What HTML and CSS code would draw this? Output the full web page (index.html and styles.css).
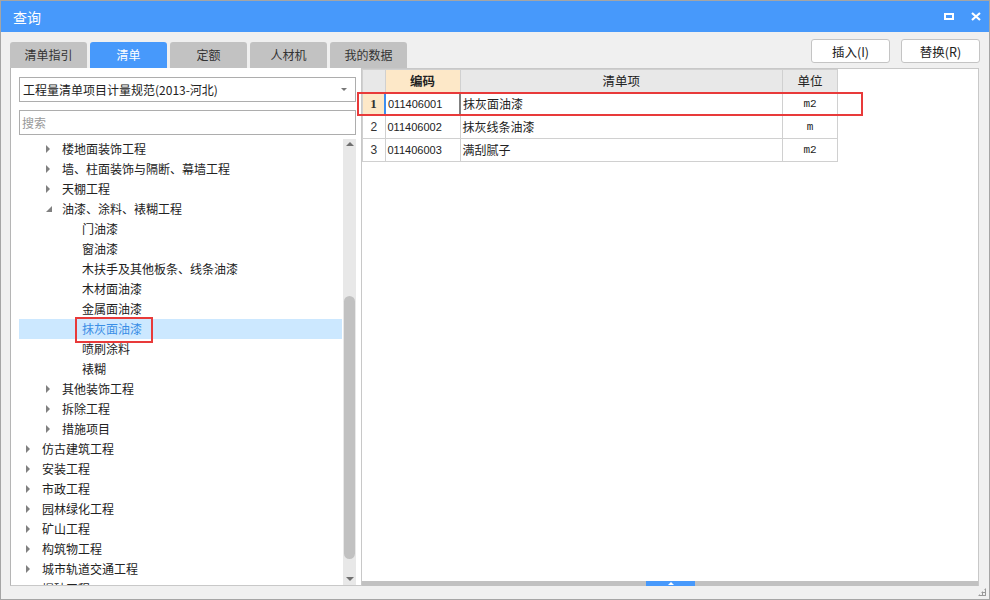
FILE: index.html
```html
<!DOCTYPE html>
<html lang="zh">
<head>
    <meta charset="UTF-8">
    <title>查询</title>
    <link rel="stylesheet" href="styles.css">
</head>
<body>
    <div class="window">
        <div class="titlebar">
            <span class="title">查询</span>
            <div class="title-buttons">
                <span class="btn-max"></span>
                <svg class="btn-close" width="10" height="9" viewBox="0 0 10 9">
                    <path d="M1 1 L9 8 M9 1 L1 8" stroke="#fff" stroke-width="2.2" fill="none"/>
                </svg>
            </div>
        </div>

        <div class="toolbar">
            <div class="tabs">
                <div class="tab">清单指引</div>
                <div class="tab active">清单</div>
                <div class="tab">定额</div>
                <div class="tab">人材机</div>
                <div class="tab">我的数据</div>
            </div>
            <div class="actions">
                <button class="button">插入(I)</button>
                <button class="button">替换(R)</button>
            </div>
        </div>

        <div class="main">
            <div class="left-panel">
                <div class="select">
                    <span>工程量清单项目计量规范(2013-河北)</span>
                    <span class="select-arrow"></span>
                </div>
                <div class="search">搜索</div>
                <div class="tree-wrap">
                    <div class="tree">
                        <div class="node lv1"><span class="arrow"></span>楼地面装饰工程</div>
                        <div class="node lv1"><span class="arrow"></span>墙、柱面装饰与隔断、幕墙工程</div>
                        <div class="node lv1"><span class="arrow"></span>天棚工程</div>
                        <div class="node lv1"><span class="arrow open"></span>油漆、涂料、裱糊工程</div>
                        <div class="node lv2">门油漆</div>
                        <div class="node lv2">窗油漆</div>
                        <div class="node lv2">木扶手及其他板条、线条油漆</div>
                        <div class="node lv2">木材面油漆</div>
                        <div class="node lv2">金属面油漆</div>
                        <div class="node lv2 selected"><span class="mark">抹灰面油漆</span></div>
                        <div class="node lv2">喷刷涂料</div>
                        <div class="node lv2">裱糊</div>
                        <div class="node lv1"><span class="arrow"></span>其他装饰工程</div>
                        <div class="node lv1"><span class="arrow"></span>拆除工程</div>
                        <div class="node lv1"><span class="arrow"></span>措施项目</div>
                        <div class="node lv0"><span class="arrow"></span>仿古建筑工程</div>
                        <div class="node lv0"><span class="arrow"></span>安装工程</div>
                        <div class="node lv0"><span class="arrow"></span>市政工程</div>
                        <div class="node lv0"><span class="arrow"></span>园林绿化工程</div>
                        <div class="node lv0"><span class="arrow"></span>矿山工程</div>
                        <div class="node lv0"><span class="arrow"></span>构筑物工程</div>
                        <div class="node lv0"><span class="arrow"></span>城市轨道交通工程</div>
                        <div class="node lv0"><span class="arrow"></span>爆破工程</div>
                    </div>
                    <div class="vscroll">
                        <span class="up"></span>
                        <div class="thumb"></div>
                        <span class="down"></span>
                    </div>
                </div>
            </div>

            <div class="right-panel">
                <table class="grid">
                    <tr class="head">
                        <th class="num"></th>
                        <th class="code">编码</th>
                        <th class="name">清单项</th>
                        <th class="unit">单位</th>
                    </tr>
                    <tr class="current">
                        <td class="num">1</td>
                        <td class="code">011406001</td>
                        <td class="name">抹灰面油漆</td>
                        <td class="unit">m2</td>
                    </tr>
                    <tr>
                        <td class="num">2</td>
                        <td class="code">011406002</td>
                        <td class="name">抹灰线条油漆</td>
                        <td class="unit">m</td>
                    </tr>
                    <tr>
                        <td class="num">3</td>
                        <td class="code">011406003</td>
                        <td class="name">满刮腻子</td>
                        <td class="unit">m2</td>
                    </tr>
                </table>
                <div class="row-mark"></div>
                <div class="hscroll">
                    <div class="hthumb"><span></span></div>
                </div>
            </div>
        </div>
        <div class="grip"></div>
    </div>
</body>
</html>
```

FILE: styles.css
```css
body {
    margin: 0;
    font-family: "Noto Sans CJK SC", sans-serif;
    font-size: 12px;
    color: #222;
}

.window {
    position: relative;
    width: 990px;
    height: 600px;
    box-sizing: border-box;
    border: 1px solid #a5a5a5;
    background: #f0f0f0;
    display: flex;
    flex-direction: column;
}

.titlebar {
    height: 31px;
    background: #4799fb;
    display: flex;
    align-items: center;
    justify-content: space-between;
    padding: 0 8px 0 12px;
    color: #fff;
}

.title {
    font-size: 14px;
    line-height: 20px;
}

.title-buttons {
    display: flex;
    align-items: center;
    gap: 17px;
}

.btn-max {
    width: 6px;
    height: 3px;
    border: 2px solid #fff;
}

.btn-close {
    display: block;
}

.toolbar {
    display: flex;
    justify-content: space-between;
    padding: 7px 9px 0 9px;
    height: 29px;
}

.tabs {
    display: flex;
    gap: 3px;
    margin-top: 3px;
}

.tab {
    width: 77px;
    height: 26px;
    line-height: 26px;
    text-align: center;
    background: #c2c2c2;
    color: #333;
    border-radius: 3px 3px 0 0;
}

.tab.active {
    background: #4799fb;
    color: #fff;
}

.actions {
    display: flex;
    gap: 11px;
}

.button {
    width: 79px;
    height: 24px;
    background: #fff;
    border: 1px solid #c4c4c4;
    border-radius: 3px;
    font-family: "Noto Sans CJK SC", sans-serif;
    font-size: 12.5px;
    color: #222;
    padding: 0;
}

.main {
    display: flex;
    padding-left: 9px;
    height: 518px;
}

.left-panel {
    width: 352px;
    box-sizing: border-box;
    background: #fff;
    border-left: 1px solid #b5b5b5;
    border-bottom: 1px solid #c8c8c8;
    padding: 9px 6px 0 8px;
    display: flex;
    flex-direction: column;
}

.select {
    height: 25px;
    box-sizing: border-box;
    border: 1px solid #adadad;
    display: flex;
    align-items: center;
    justify-content: space-between;
    padding: 0 8px 0 3px;
    font-size: 12px;
}

.select-arrow {
    width: 0;
    height: 0;
    border-left: 3px solid transparent;
    border-right: 3px solid transparent;
    border-top: 3px solid #777;
}

.search {
    height: 25px;
    box-sizing: border-box;
    border: 1px solid #adadad;
    margin-top: 8px;
    padding-left: 2px;
    line-height: 23px;
    color: #999;
}

.tree-wrap {
    display: flex;
    margin-top: 4px;
    flex: 1;
    overflow: hidden;
}

.tree {
    width: 323px;
}

.node {
    height: 20px;
    line-height: 20px;
    white-space: nowrap;
    display: flex;
    align-items: center;
}

.node.lv0 { padding-left: 7px; }
.node.lv1 { padding-left: 27px; }
.node.lv2 { padding-left: 63px; }

.arrow {
    width: 0;
    height: 0;
    border-top: 4px solid transparent;
    border-bottom: 4px solid transparent;
    border-left: 4px solid #808080;
    margin-right: 12px;
}

.arrow.open {
    border-top: 0;
    border-bottom: 6px solid #808080;
    border-left: 6px solid transparent;
    margin-right: 10px;
}

.node.selected {
    background: #cce8ff;
    color: #3a8ee6;
}

.mark {
    position: relative;
}

.mark::after {
    content: "";
    position: absolute;
    left: -7px;
    right: -11px;
    top: -2px;
    bottom: -4px;
    border: 2px solid #e83a3a;
}

.vscroll {
    width: 13px;
    margin-left: 1px;
    background: #e8e8e8;
    display: flex;
    flex-direction: column;
    align-items: center;
    padding: 3px 0 4px 0;
    box-sizing: border-box;
}

.vscroll .up {
    width: 0;
    height: 0;
    border-left: 4px solid transparent;
    border-right: 4px solid transparent;
    border-bottom: 4px solid #707070;
}

.vscroll .down {
    width: 0;
    height: 0;
    border-left: 4px solid transparent;
    border-right: 4px solid transparent;
    border-top: 4px solid #707070;
}

.thumb {
    width: 11px;
    background: #c1c1c1;
    border-radius: 6px;
    margin: 150px 0 18px 0;
    flex: 1;
}

.right-panel {
    position: relative;
    width: 618px;
    box-sizing: border-box;
    margin-left: -1px;
    background: #fff;
    border: 1px solid #c8c8c8;
    border-bottom: 0;
}

.grid {
    border-collapse: collapse;
    font-size: 12px;
}

.grid th,
.grid td {
    border: 1px solid #d0d0d0;
    height: 22px;
    padding: 0;
    line-height: 20px;
    white-space: nowrap;
}

.grid th {
    background: #e8e8e8;
    font-weight: normal;
    text-align: center;
    font-size: 12.5px;
}

.grid th.code {
    background: #fde8c8;
    font-weight: bold;
}

.grid .num { width: 21px; text-align: center; }
.grid .code { width: 71px; }
.grid .name { width: 319px; }
.grid .unit { width: 54px; text-align: center; }

.grid td.num {
    font-family: "Liberation Sans", sans-serif;
    font-size: 12px;
    color: #333;
}

.grid td.code {
    font-family: "Liberation Sans", sans-serif;
    font-size: 11px;
    padding-left: 2px;
}

.grid td.name {
    padding-left: 2px;
}

.grid td.unit {
    font-family: "Liberation Mono", monospace;
    font-size: 11px;
}

.current td.num {
    background: #fde8c8;
    font-family: "Liberation Serif", serif;
    font-weight: bold;
    font-size: 13px;
}

.current td.code {
    border-left: 2px solid #3d8ef0;
}

.current td.name {
    border-left: 2px solid #808080;
}

.row-mark {
    position: absolute;
    left: -5px;
    top: 23px;
    width: 502px;
    height: 20px;
    border: 2px solid #e83a3a;
}

.hscroll {
    position: absolute;
    left: 0;
    right: 0;
    bottom: 0;
    height: 5px;
    background: #c1c1c1;
}

.hthumb {
    position: absolute;
    left: 284px;
    width: 49px;
    height: 5px;
    background: #4799fb;
    display: flex;
    justify-content: center;
}

.hthumb span {
    width: 0;
    height: 0;
    margin-top: 1px;
    border-left: 3px solid transparent;
    border-right: 3px solid transparent;
    border-bottom: 3px solid #fff;
}

.grip {
    position: absolute;
    right: 3px;
    bottom: 3px;
    width: 8px;
    height: 8px;
    background:
        radial-gradient(circle, #999 1px, transparent 1.2px) 0 0 / 3px 3px;
    clip-path: polygon(100% 0, 100% 100%, 0 100%);
}
```
